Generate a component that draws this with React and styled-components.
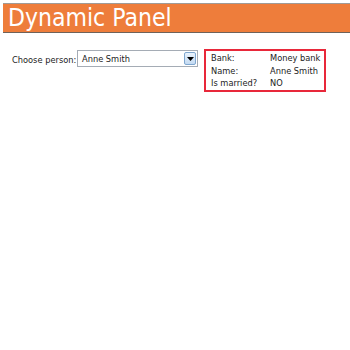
import React, { useState } from 'react';
import styled, { createGlobalStyle } from 'styled-components';

const people = {
  'Anne Smith': { bank: 'Money bank', married: 'NO' },
};

export default function App() {
  const [person] = useState('Anne Smith');
  const info = people[person];
  return (
    <>
      <GlobalSC />
      <HeaderSC>Dynamic Panel</HeaderSC>
      <ContentSC>
        <LabelSC>Choose person:</LabelSC>
        <SelectSC>
          <span>{person}</span>
          <ArrowSC>
            <svg width="7" height="4" viewBox="0 0 7 4">
              <path d="M0 0h7L3.5 4z" fill="#000" />
            </svg>
          </ArrowSC>
        </SelectSC>
        <PanelSC>
          <span>Bank:</span>
          <span>{info.bank}</span>
          <span>Name:</span>
          <span>{person}</span>
          <span>Is married?</span>
          <span>{info.married}</span>
        </PanelSC>
      </ContentSC>
    </>
  );
}

const GlobalSC = createGlobalStyle`
  body {
    margin: 0;
    background: #fff;
    font-family: "DejaVu Sans Condensed", "DejaVu Sans", sans-serif;
  }
`;

const HeaderSC = styled('div')`
  margin: 3px 0 0 3px;
  height: 28px;
  line-height: 28px;
  padding-left: 5px;
  background: #ee7d3b;
  border-top: 1px solid #a09a96;
  border-bottom: 1px solid #6e625a;
  color: #fff;
  font-size: 24.5px;
`;

const ContentSC = styled('div')`
  display: flex;
  align-items: flex-start;
  padding: 16px 0 0 12px;
  font-size: 9.2px;
  color: #222;
  white-space: nowrap;
`;

const LabelSC = styled('div')`
  width: 65px;
  margin-top: 5px;
`;

const SelectSC = styled('div')`
  width: 115px;
  height: 15px;
  border: 1px solid #a5acb5;
  display: flex;
  align-items: center;
  justify-content: space-between;
  padding-left: 4px;
  box-sizing: content-box;
  margin-top: 1px;
`;

const ArrowSC = styled('div')`
  width: 12px;
  height: 13px;
  margin-right: 1px;
  border: 1px solid #7fa7cf;
  border-radius: 2px;
  background: linear-gradient(#eaf3fc, #c3daf2);
  display: flex;
  align-items: center;
  justify-content: center;
  box-sizing: border-box;
`;

const PanelSC = styled('div')`
  margin-left: 6px;
  width: 109px;
  border: 2px solid #e8283a;
  padding: 1px 4px 0 5px;
  display: grid;
  grid-template-columns: 59px 1fr;
  line-height: 12.6px;
`;
